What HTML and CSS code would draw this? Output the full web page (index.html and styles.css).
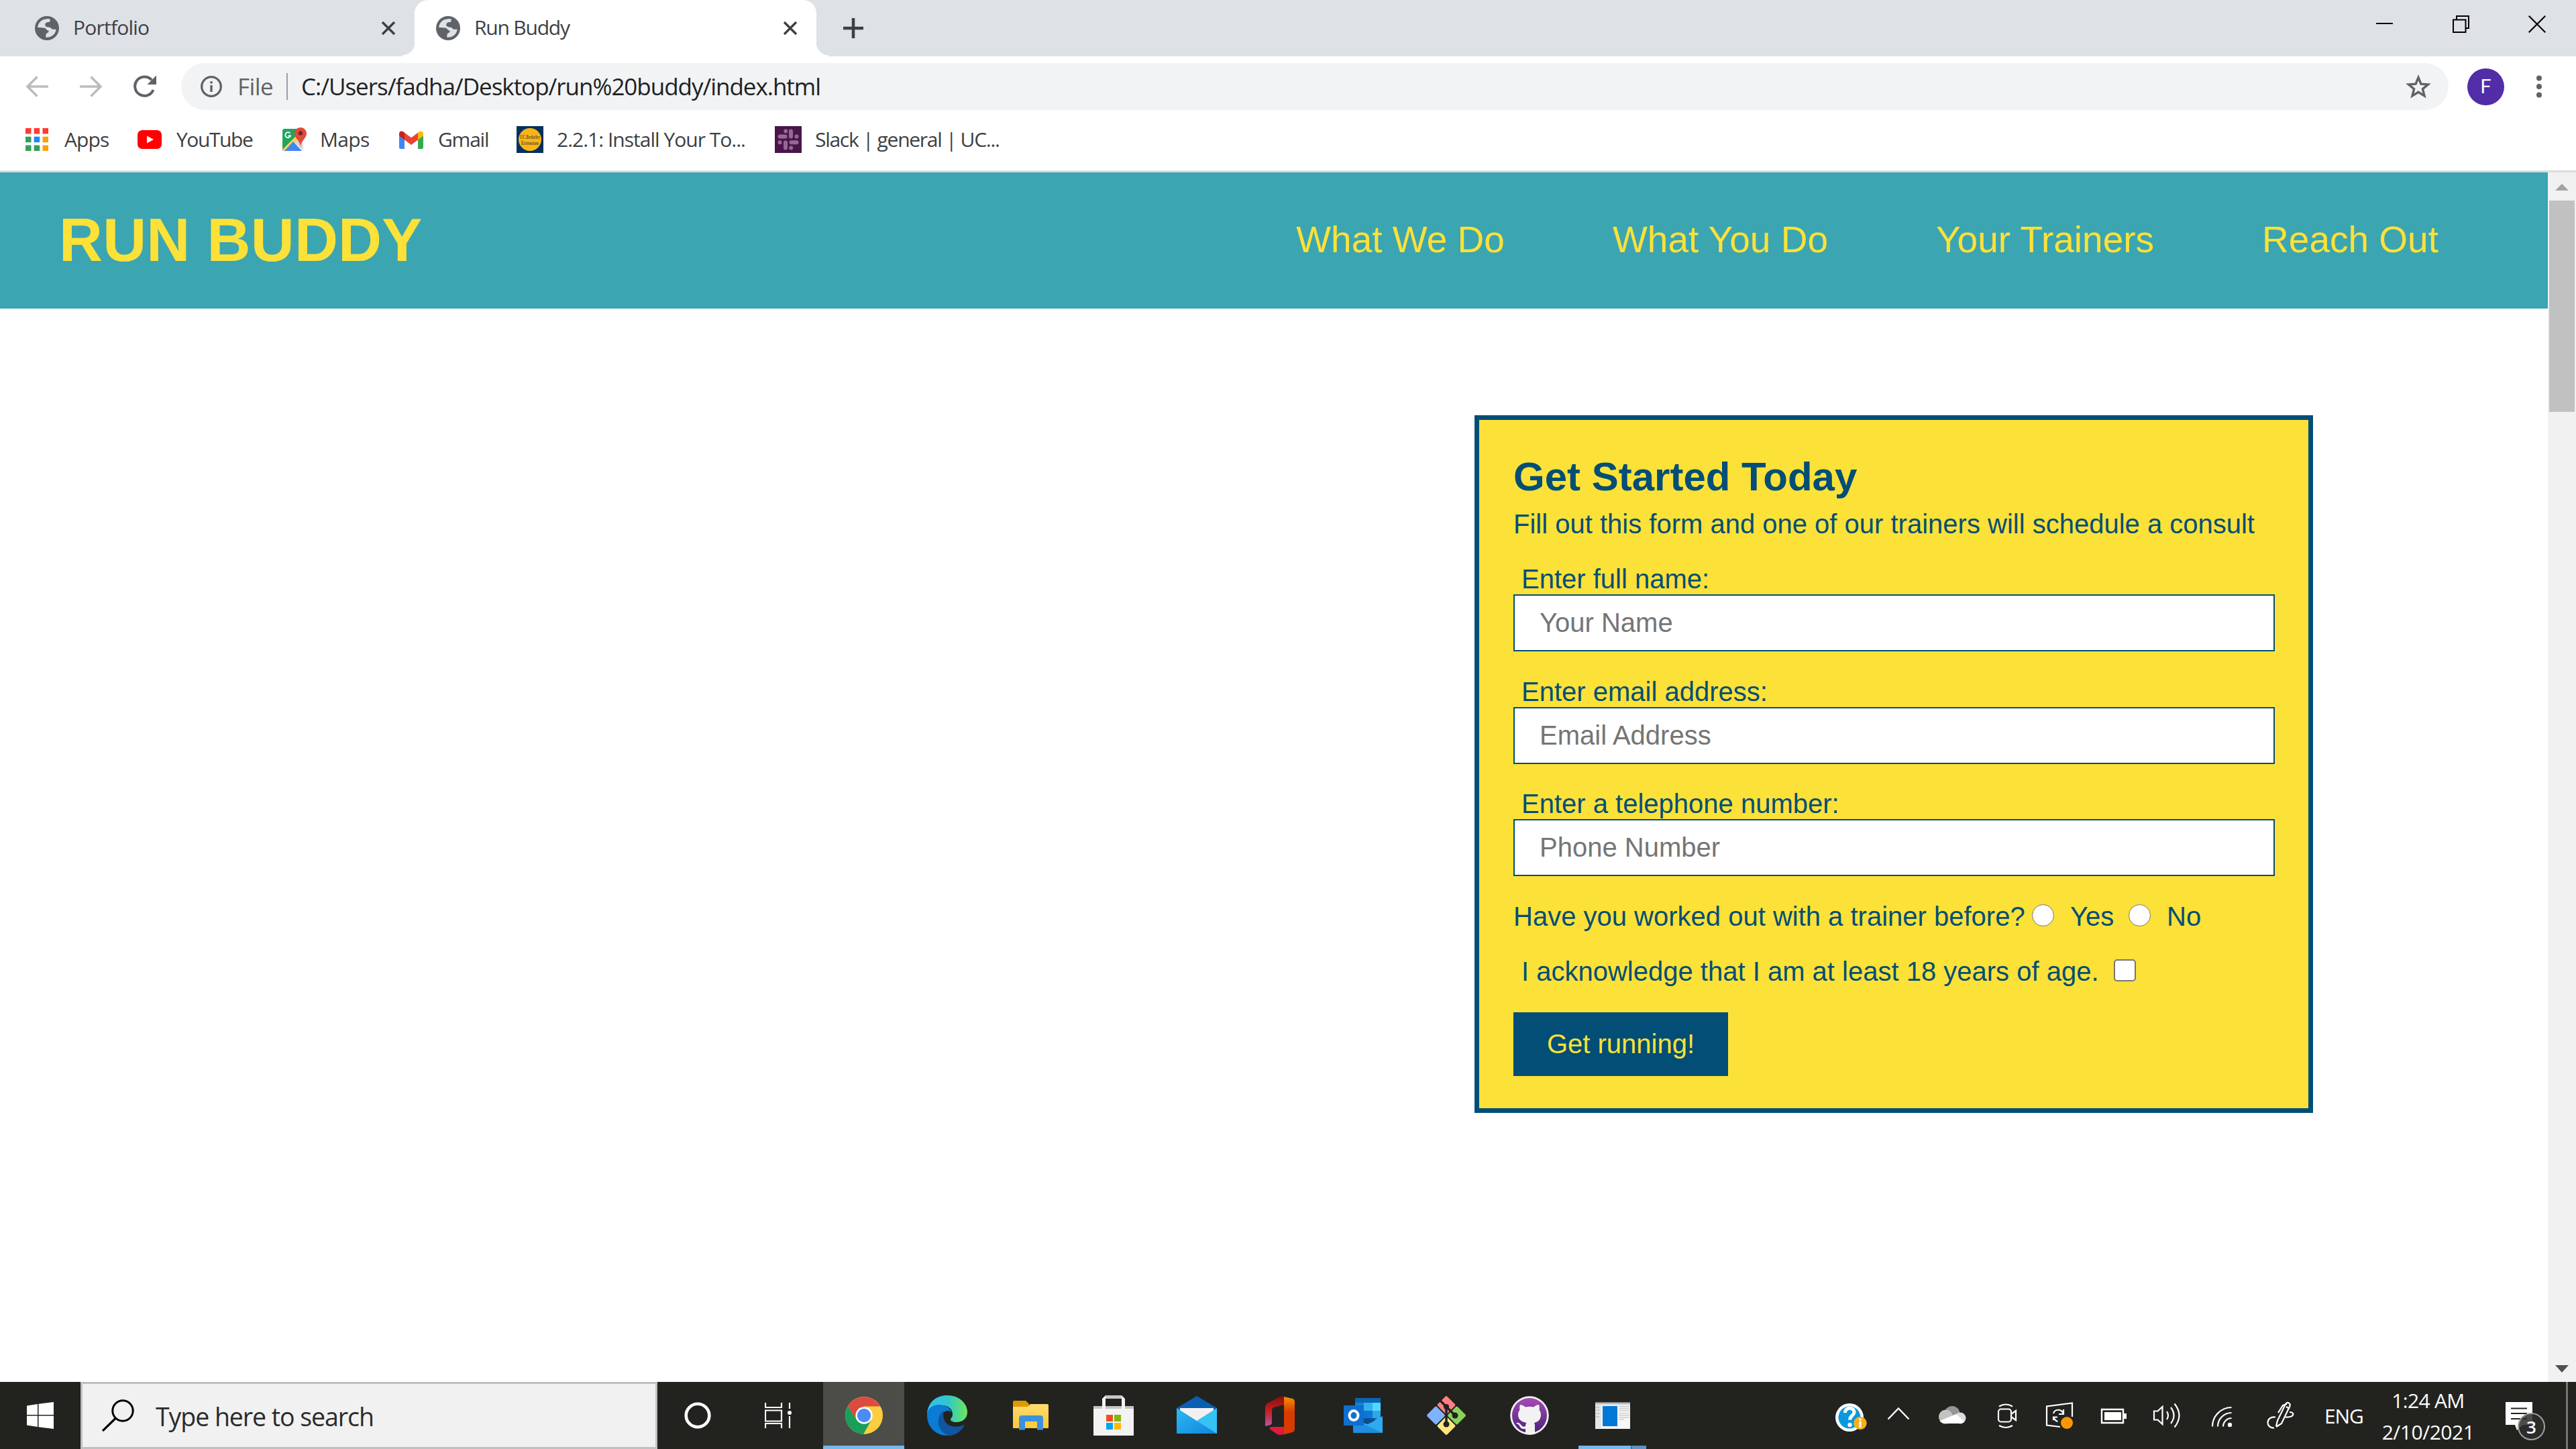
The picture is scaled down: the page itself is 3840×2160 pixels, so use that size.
FILE: index.html
```html
<!DOCTYPE html>
<html lang="en">
<head>
<meta charset="utf-8">
<title>Run Buddy</title>
<link rel="stylesheet" href="styles.css">
</head>
<body>
<svg class="defs" width="0" height="0" aria-hidden="true">
  <defs>
    <symbol id="globe" viewBox="0 0 36 36">
      <circle cx="18" cy="18" r="18" fill="#5f6368"/>
      <path d="M14.500 4.500C9 6 4.500 11 4.200 17c4 .2 8 .2 10.500.8 2.300.6 2.300 3.200 4.800 3.700 1.500.3 1.500 1.500.6 2.500-1 1.300-3.400 1.400-3.600 3.500-.1 1.500-.2 3-.3 4.300 8 .6 14.500-4.500 15.500-12-2.500-.2-4.700.6-6.500-.8-1.500-1.200-2.400-2.500-4.700-2.500-2.700 0-5.500-1.300-5.300-4 .2-2.300 2.500-3.500 4.500-3.500 1.800 0 3.200-.6 3-2.300-.1-1-.3-1.500.2-2.100-3-1-6-.8-8.400.7z" fill="#dee1e6"/>
    </symbol>
    <symbol id="cross" viewBox="0 0 22 22"><path d="M2 2l18 18M20 2L2 20" stroke="#3c4043" stroke-width="3.400" fill="none"/></symbol>
    <linearGradient id="edgeTop" x1="0" x2="1"><stop offset="0" stop-color="#35c1f1"/><stop offset=".5" stop-color="#2fc5cf"/><stop offset="1" stop-color="#6be85a"/></linearGradient>
    <linearGradient id="folderG" x2="0" y2="1"><stop offset="0" stop-color="#ffdb70"/><stop offset="1" stop-color="#fdc83a"/></linearGradient>
    <linearGradient id="officeL" x2="0" y2="1"><stop offset="0" stop-color="#8a0d0a"/><stop offset=".5" stop-color="#c81f25"/><stop offset="1" stop-color="#b955a8"/></linearGradient>
    <linearGradient id="officeR" x2="0" y2="1"><stop offset="0" stop-color="#f39200"/><stop offset=".4" stop-color="#d83b01"/><stop offset="1" stop-color="#d83b01"/></linearGradient>
    <linearGradient id="hubG" x2="0" y2="1"><stop offset="0" stop-color="#a64bb5"/><stop offset="1" stop-color="#4a2178"/></linearGradient>
    <linearGradient id="mailG" x2="1" y2="1"><stop offset="0" stop-color="#2fb8f2"/><stop offset="1" stop-color="#0f86dd"/></linearGradient>
  </defs>
</svg>

<header class="tabs">
  <div class="tab">
    <svg class="favicon" width="36" height="36"><use href="#globe"/></svg>
    <span class="tab-title t1">Portfolio</span>
    <svg class="tab-close" width="22" height="22"><use href="#cross"/></svg>
  </div>
  <div class="tab active">
    <svg class="favicon" width="36" height="36"><use href="#globe"/></svg>
    <span class="tab-title t2">Run Buddy</span>
    <svg class="tab-close" width="22" height="22"><use href="#cross"/></svg>
  </div>
  <svg class="new-tab" width="30" height="30"><path d="M15 0v30M0 15h30" stroke="#3c4043" stroke-width="4.500"/></svg>
  <div class="window-controls">
    <svg width="25" height="25"><path d="M0 12h25" stroke="#000" stroke-width="2"/></svg>
    <svg width="25" height="26"><path d="M1 6.500h18.500v18.500H1zM6 6.500V1h18v18h-4.500" fill="none" stroke="#000" stroke-width="2"/></svg>
    <svg width="26" height="26"><path d="M.7.7l24.600 24.600M25.300.7L.7 25.300" stroke="#000" stroke-width="2.200"/></svg>
  </div>
</header>

<div class="toolbar">
  <svg class="back" width="34" height="32"><path d="M34 16H3M17.500 1.500L3 16l14.500 14.500" fill="none" stroke="#babcbe" stroke-width="3.600"/></svg>
  <svg class="forward" width="34" height="32"><path d="M0 16h31M16.500 1.500L31 16 16.500 30.500" fill="none" stroke="#babcbe" stroke-width="3.600"/></svg>
  <svg class="reload" width="34" height="34"><path d="M29.500 22A14.200 14.200 0 1 1 27 7.200" fill="none" stroke="#5f6368" stroke-width="4"/><path d="M34 .5V14H20.500z" fill="#5f6368"/></svg>
  <div class="omnibox">
    <svg width="32" height="32"><circle cx="16" cy="16" r="14.300" fill="none" stroke="#5f6368" stroke-width="3.300"/><path d="M16 14v10M16 8.200v3.400" stroke="#5f6368" stroke-width="3.400"/></svg>
    <span class="scheme">File</span>
    <span class="divider"></span>
    <span class="url">C:/Users/fadha/Desktop/run%20buddy/index.html</span>
    <svg class="star" width="38" height="36"><path d="M19 4.500l3.900 9.600 10.600.8-8.100 6.700 2.600 10.300L19 26.300l-9 5.600 2.600-10.300-8.100-6.700 10.600-.8z" fill="none" stroke="#5f6368" stroke-width="3.400"/></svg>
  </div>
  <span class="avatar">F</span>
  <svg class="menu" width="10" height="34"><g fill="#5f6368"><circle cx="5" cy="4.500" r="4"/><circle cx="5" cy="17" r="4"/><circle cx="5" cy="29.500" r="4"/></g></svg>
</div>

<nav class="bookmarks">
  <a class="bm"><svg width="34" height="34"><g fill="#ff3b30"><path d="M0 0h8.500v8.500H0z"/><path d="M12.700 0h8.500v8.500h-8.500zM25.500 0H34v8.500h-8.500z"/></g><path d="M0 12.700h8.500v8.500H0zM0 25.500h8.500V34H0zM12.700 25.500h8.500V34h-8.500z" fill="#34a056"/><path d="M12.700 12.700h8.500v8.500h-8.500z" fill="#1e88f5"/><path d="M25.500 12.700H34v8.500h-8.500zM25.500 25.500H34V34h-8.500z" fill="#f7a30a"/></svg><span class="apps">Apps</span></a>
  <a class="bm"><svg width="36" height="28"><rect width="36" height="28" rx="7" fill="#f00"/><path d="M14 8.500l10 5.500-10 5.500z" fill="#fff"/></svg><span class="yt">YouTube</span></a>
  <a class="bm"><svg width="36" height="38" viewBox="0 0 36 38"><rect y="3" width="32" height="33" rx="3" fill="#f1f1f1"/><path d="M3 3h22l3 6L0 36V6a3 3 0 0 1 3-3z" fill="#23a45c"/><path d="M30 16v18L17 23z" fill="#d6d6d6"/><path d="M0 34L24 10l4 4L4 37z" fill="#fbd34c"/><path d="M3 36l13-14 13 14z" fill="#4285f4"/><path d="M27 1c-5 0-9 4-9 9 0 7 7 9 9 19 2-10 9-12 9-19 0-5-4-9-9-9z" fill="#df4b3e"/><circle cx="27" cy="9.500" r="3.200" fill="#7c231c"/><path d="M11.500 9.800a4 4 0 1 0 .6 3.700H8.500" fill="none" stroke="#fff" stroke-width="1.800"/></svg><span class="maps">Maps</span></a>
  <a class="bm"><svg width="36" height="27" viewBox="0 0 36 27"><path d="M0 4l8 6v17H2.500A2.500 2.500 0 0 1 0 24.500z" fill="#4285f4"/><path d="M36 4l-8 6v17h5.500a2.500 2.500 0 0 0 2.500-2.500z" fill="#34a853"/><path d="M28 2.700l2-1.500C32.500-.7 36 1 36 4v3.500l-8 6z" fill="#fbbc04"/><path d="M0 7.500V4c0-3 3.500-4.700 6-2.800L8 2.700v10.800z" fill="#c5221f"/><path d="M8 2.700l10 7.600 10-7.600v10.800L18 21 8 13.500z" fill="#ea4335"/></svg><span class="gmail">Gmail</span></a>
  <a class="bm"><svg class="seal-icon" width="40" height="40"><path fill="#04305f" d="M0 0h40v40H0z"/><circle cx="20" cy="20" r="17" fill="#fdb515"/><text x="20" y="19" class="seal" textLength="30" lengthAdjust="spacingAndGlyphs">UC Berkeley</text><text x="20" y="27.500" class="seal" textLength="26" lengthAdjust="spacingAndGlyphs">Extension</text></svg><span class="ucb">2.2.1: Install Your To...</span></a>
  <a class="bm"><svg width="40" height="40"><path fill="#4a154b" d="M0 0h40v40H0z"/><g stroke="#926a93" stroke-width="6" stroke-linecap="round"><path d="M16.300 7.500v.01M7.500 15.500h8M24 7.500v8M32.500 15.500v.01M24.500 24.200h8M24.200 32.500v.01M16 24.500v8M7.500 24.200v.01"/></g></svg><span class="slack">Slack | general | UC...</span></a>
</nav>

<div class="viewport">
  <main class="page">
    <div class="site-header">
      <h1>RUN BUDDY</h1>
      <nav class="site-nav"><a>What We Do</a><a>What You Do</a><a>Your Trainers</a><a>Reach Out</a></nav>
    </div>
    <section class="hero">
      <form class="signup">
        <h2>Get Started Today</h2>
        <p class="intro">Fill out this form and one of our trainers will schedule a consult</p>
        <div class="field"><label for="name">Enter full name:</label><input id="name" type="text" placeholder="Your Name"></div>
        <div class="field"><label for="email">Enter email address:</label><input id="email" type="email" placeholder="Email Address"></div>
        <div class="field"><label for="phone">Enter a telephone number:</label><input id="phone" type="tel" placeholder="Phone Number"></div>
        <div class="choice">
          <span class="question">Have you worked out with a trainer before?</span>
          <input type="radio" name="trainer" id="yes"><label class="yes" for="yes">Yes</label>
          <input type="radio" name="trainer" id="no"><label class="no" for="no">No</label>
        </div>
        <div class="choice ack"><label for="age">I acknowledge that I am at least 18 years of age.</label><input type="checkbox" id="age"></div>
        <button type="button">Get running!</button>
      </form>
    </section>
  </main>
  <div class="scrollbar">
    <svg width="20" height="10"><path d="M0 10L10 0l10 10z" fill="#a3a3a3"/></svg>
    <span class="thumb"></span>
    <svg class="down" width="20" height="11"><path d="M0 0h20L10 11z" fill="#505050"/></svg>
  </div>
</div>

<footer class="taskbar">
  <svg class="start" width="40" height="40"><path d="M0 5.500L16 3v16H0zM17.500 2.800L40 0v19H17.500zM0 20.500h16V37L0 34.500zM17.500 20.500H40V40l-22.500-2.800z" fill="#fff"/></svg>
  <div class="search">
    <svg width="48" height="48"><circle cx="31" cy="17" r="15.200" fill="none" stroke="#000" stroke-width="3"/><path d="M20.500 28L1 47" stroke="#000" stroke-width="3.200"/></svg>
    <span>Type here to search</span>
  </div>
  <svg class="cortana" width="40" height="40"><circle cx="20" cy="20" r="17.300" fill="none" stroke="#fff" stroke-width="4.600"/></svg>
  <svg class="taskview" width="40" height="38"><g fill="none" stroke="#fff" stroke-width="2.200"><path d="M1 0v7h24V0M1 11.500h24v16H1zM1 38v-7h24v7M37 0v9M37 20v18"/></g><circle cx="37" cy="15" r="3" fill="#fff"/></svg>
  <div class="apps-row">
    <span class="app current"><svg width="60" height="60"><circle cx="30" cy="30" r="28" fill="#fdcd40"/><path d="M5.800 16A28 28 0 0 1 54.200 16.500H30L18 36z" fill="#dd4b3f"/><path d="M5.800 16A28 28 0 0 0 29 58L41 36.500 18.500 36z" fill="#1b9e5a"/><circle cx="30" cy="30" r="12.700" fill="#fff"/><circle cx="30" cy="30" r="10.200" fill="#4c8bf5"/></svg></span>
    <span class="app"><svg width="60" height="60"><path d="M0 30C0 10 14 0 30 0c18 0 30 12 30 25 0 10-8 15-16 15-6 0-9-2-9-4 0-2 3-3 3-8 0-7-6-13-16-13C10 15 0 22 0 30z" fill="url(#edgeTop)"/><path d="M0 30C0 19 9 14 18 14c9 0 17 5 18 11-9-6-15 3-15 11 0 12 9 20 18 22-3 1.500-6 2-9 2C13 60 0 47 0 30z" fill="#0b7bd4"/><path d="M25 23c-12 7-12 30 7 37 10 0 18-6 23-14 1-2 0-2-1.500-1.500C38 51 20 43 25 23z" fill="#10559f"/></svg></span>
    <span class="app"><svg width="60" height="60"><path d="M4 10q0-2 2-2h17l5 5v6H4z" fill="#dd9a00"/><path d="M4 17h22l4-4h25q2 0 2 2v34H4z" fill="url(#folderG)"/><path d="M13 51.500V34q0-4 4-4h28q4 0 4 4v17.500h-9V39H22v12.500z" fill="#3c92da"/></svg></span>
    <span class="app"><svg width="60" height="60"><path d="M0 16h60v5H0z" fill="#c4c4c4"/><path d="M13 20V5l5-5h24l5 5v15h-5V5H18v15z" fill="#f4f4f4"/><path d="M18 0h24v5H18z" fill="#c8c8c8"/><path d="M0 20h60v40H0z" fill="#f3f3f3"/><path d="M19 29h10v10H19z" fill="#f25022"/><path d="M31 29h10v10H31z" fill="#7fba00"/><path d="M19 41h10v10H19z" fill="#00a4ef"/><path d="M31 41h10v10H31z" fill="#ffb900"/></svg></span>
    <span class="app"><svg width="60" height="60"><path d="M0 19L30 1l30 18v9H0z" fill="#0a5fb4"/><path d="M5 19h50v10L30 42 5 29z" fill="#f3f1f0"/><path d="M60 19v38H0z" fill="#35c3f3"/><path d="M0 19l60 38H0z" fill="url(#mailG)"/><path d="M5 19h50L30 37.500z" fill="#f3f1f0"/></svg></span>
    <span class="app"><svg width="60" height="60"><path d="M8 46V17q0-3 3-5L30 2q4-1 6 0v12l-12 3q-6 1-6 5v19q0 2-2 3z" fill="url(#officeL)"/><path d="M36 2l13 3q3 1 3 5v40q0 4-3 5l-16 4q3-2 3-8z" fill="url(#officeR)"/><path d="M16 47h20v5q0 6-5 7-3 0-5-1L17 52q-4-3-1-5z" fill="#dc1d3c"/></svg></span>
    <span class="app"><svg width="60" height="60"><path d="M18 4h38v7H18z" fill="#0b64b4"/><path d="M18 11h13v12H18z" fill="#0a84dc"/><path d="M31 11h13v12H31z" fill="#35b0ef"/><path d="M44 11h12v12H44z" fill="#50d9ff"/><path d="M18 23h13v14H18z" fill="#0868c0"/><path d="M31 23h13v14H31z" fill="#0a78d4"/><path d="M44 23h12v14H44z" fill="#2ca8ea"/><path d="M20 34h31l-14 9z" fill="#0a4f95"/><path d="M15 36l22 7 22-12v25H15z" fill="#2faaf0"/><path d="M15 36l44 20H15z" fill="#1d8ee0"/><path d="M1 15h30v30H1z" fill="#0f6fd0"/><ellipse cx="16" cy="30" rx="6.500" ry="7" fill="none" stroke="#fff" stroke-width="4"/></svg></span>
    <span class="app"><svg width="60" height="60"><g transform="rotate(45 30 30)"><rect x="9" y="9" width="20" height="20" rx="2" fill="#ff8080"/><rect x="31" y="9" width="20" height="20" rx="2" fill="#8ad25c"/><rect x="9" y="31" width="20" height="20" rx="2" fill="#80b3ff"/><rect x="31" y="31" width="20" height="20" rx="2" fill="#ffe680"/></g><g stroke="#22231f" stroke-width="3.500" fill="none"><path d="M20 7l10 10v24M30 17l13 13"/></g><g fill="#22231f"><circle cx="30" cy="17" r="4"/><circle cx="43" cy="30" r="4.500"/><circle cx="30" cy="43" r="4.500"/></g></svg></span>
    <span class="app"><svg width="60" height="60"><circle cx="30" cy="30" r="28.800" fill="#f2f2f2"/><circle cx="30" cy="30" r="26" fill="url(#hubG)"/><path d="M16 14c3 0 6 2 8 3.500a28 28 0 0 1 12 0c2-1.500 5-3.500 8-3.500 1 3 1 5 .5 7.500C46 24 47 26 47 29c0 7-4 10.500-10 12 1 2 1 4 1 6v10.500a28 28 0 0 1-14 .3V50c-8 1-8-4-10-6-1-1-3-2-4-2 2-3 6 0 7.500 2 2 3 4 3 6.500 2 0-2 .5-4 1.500-5C18 39.500 13 36 13 29c0-3 1-5 2.500-7.500C15 19 15 17 16 14z" fill="#f2f2f2"/></svg></span>
    <span class="app open"><svg width="60" height="60"><path d="M4 10h52v40H4z" fill="#f6f6f6"/><path d="M4 10h52v2H4z" fill="#8f8f8f"/><path d="M4 12h52v3H4z" fill="#dcdcdc"/><path d="M4 15h9v34H4z" fill="#e6e6e6"/><path d="M15 16h22v30H15z" fill="#0078d7"/><path d="M39 17h16M39 20h16M39 23h16M39 27h16M39 30h16M39 33h16M39 36h8" stroke="#bcbcbc"/><path d="M5 18h6M5 22h6M5 27h6M5 32h6" stroke="#999" stroke-dasharray="2 1"/></svg></span>
  </div>
  <div class="tray">
    <svg width="80" height="100"><circle cx="47" cy="53" r="21" fill="#fff"/><circle cx="47" cy="53" r="16.500" fill="#0a99dc"/><path d="M40.500 46c0-9 13.500-8.500 13.500-1 0 5-6.500 5.500-6.500 11.500" fill="none" stroke="#fff" stroke-width="5"/><circle cx="47.500" cy="64" r="3.200" fill="#fff"/><circle cx="63" cy="61.500" r="9.700" fill="#f9b016"/><path d="M63 59v9M63 54.500v3" stroke="#fff" stroke-width="3.400"/></svg>
    <svg width="80" height="100"><path d="M24.500 55.500L40 39.500l15.500 16" fill="none" stroke="#fff" stroke-width="2.400"/></svg>
    <svg width="80" height="100"><circle cx="40" cy="47.500" r="11.500" fill="#959595"/><circle cx="30.500" cy="52" r="10.500" fill="#c3c3c3"/><circle cx="52" cy="54" r="8.500" fill="#dcdcdc"/><path d="M21.500 58L46 48l12 11a7 7 0 0 1-6 3H29a9 9 0 0 1-7.500-4z" fill="#fff"/></svg>
    <svg width="80" height="100"><g fill="none" stroke="#fff" stroke-width="2.200"><rect x="29" y="40.500" width="19" height="19" rx="4"/><path d="M48 48l7-5v14l-7-5M30 36.500q10-6 20 0M30 65q10 6 20 0"/></g></svg>
    <svg width="80" height="100"><g fill="none" stroke="#fff" stroke-width="2.200"><path d="M59 52V31.500l-38 5v28l20 2.500"/><path d="M31 47c2-7 12-7 14.500 0M46 41v7h-7M31 57v-4.500h6M31.500 53q2 5 6 6"/></g><circle cx="51" cy="61" r="9" fill="#ff9800"/></svg>
    <svg width="80" height="100"><path d="M23 41h32v20H23z" fill="none" stroke="#fff" stroke-width="2.400"/><path d="M27 45h25v12H27zM56 47h4v8h-4z" fill="#fff"/></svg>
    <svg width="80" height="100"><g fill="none" stroke="#fff" stroke-width="2.200"><path d="M21 43.500h5.500l7-6.500v26l-7-6.500H21zM40 44q4 6 0 12M46 38q9 12 0 24M51.500 32.500q14 17.500 0 35"/></g></svg>
    <svg width="80" height="100"><g fill="none" stroke="#fff" stroke-width="2.200"><path d="M28 66.500A28.500 28.500 0 0 1 56.500 38M36 66.500A20.500 20.500 0 0 1 56.500 46M44 66.500A12.500 12.500 0 0 1 56.500 54"/></g><circle cx="54" cy="64" r="3.200" fill="#fff"/></svg>
    <svg width="100" height="100"><g fill="none" stroke="#fff" stroke-width="2.200"><path d="M43 66l2-8.500L57 33q3-4 6-.5 1.500 1.500 0 4.500L51 62l-8 5M46 46l7-11 6-2M58 37l5 3M42 52.500c-15-2-15 17-2 16M63 45c8 0 8 8-6 7.500"/></g></svg>
  </div>
  <span class="lang">ENG</span>
  <div class="clock"><span class="time">1:24 AM</span><span class="date">2/10/2021</span></div>
  <div class="notify">
    <svg width="40" height="46"><path d="M0 0h40v34H26l-9 8-3-8H0z" fill="#fff"/><path d="M8 9.500h24M8 17h24M8 25h24" stroke="#22231f" stroke-width="2"/></svg>
    <span class="badge">3</span>
  </div>
  <span class="show-desktop"></span>
</footer>
</body>
</html>
```
FILE: styles.css
```css
* { box-sizing: border-box; }
body {
  margin: 0;
  width: 3840px;
  height: 2160px;
  overflow: hidden;
  display: flex;
  flex-direction: column;
  background: #fff;
  color: #3c4043;
  font-family: "Open Sans", "Noto Sans", sans-serif;
  font-size: 30px;
}
svg { display: block; flex: none; }
span { white-space: nowrap; }
.defs { position: absolute; }

/* Browser tab strip */
.tabs { height: 84px; flex: none; display: flex; align-items: center; background: #dee1e6; }
.tab { width: 618px; height: 84px; display: flex; align-items: center; padding-left: 52px; }
.tab.active { width: 599px; padding-left: 32px; background: #fff; border-radius: 20px 20px 0 0; position: relative; }
.tab.active::before, .tab.active::after {
  content: ""; position: absolute; bottom: 0; width: 18px; height: 20px;
}
.tab.active::before { left: -18px; background: radial-gradient(circle at 0 0, transparent 18px, #fff 18.500px); }
.tab.active::after { right: -18px; background: radial-gradient(circle at 100% 0, transparent 18px, #fff 18.500px); }
.tab-title { margin-left: 21px; padding-bottom: 3px; }
.t1 { letter-spacing: -0.79px; }
.t2 { letter-spacing: -1.2px; }
.tab-close { margin-left: auto; margin-right: 28px; }
.new-tab { margin-left: 40px; }
.window-controls { margin-left: auto; margin-right: 45px; display: flex; gap: 88.500px; align-items: center; padding-bottom: 13px; }

/* Address bar */
.toolbar { height: 90px; flex: none; display: flex; align-items: center; padding-left: 38px; }
.forward { margin-left: 47px; }
.reload { margin-left: 46px; }
.omnibox {
  width: 3380px; height: 70px; margin-left: 37px; padding: 0 26px 0 29px;
  display: flex; align-items: center;
  border-radius: 35px; background: #f1f3f4; font-size: 35px;
}
.scheme { margin-left: 23px; padding-bottom: 1px; width: 73px; color: #5f6368; letter-spacing: -0.58px; }
.divider { width: 2px; height: 40px; background: #9aa0a6; }
.url { margin-left: 20px; padding-bottom: 1px; color: #202124; letter-spacing: -1.03px; }
.star { margin-left: auto; }
.avatar {
  width: 55px; height: 55px; margin-left: 28px; border-radius: 50%;
  display: flex; align-items: center; justify-content: center;
  background: #512da8; color: #fff; font: 29px Roboto, sans-serif;
}
.menu { margin-left: 47px; }

/* Bookmarks bar */
.bookmarks {
  height: 83px; flex: none; padding: 0 0 12px 38px;
  display: grid; grid-template-columns: 167px 216px 174px 175px 385px 400px; align-items: center;
  border-bottom: 3px solid #dadce0;
}
.bm { display: flex; align-items: center; gap: 20px; }
.bm span { padding-bottom: 1px; }
.bm:first-child { gap: 24px; }
.bm:nth-child(2), .bm:nth-child(4) { gap: 22px; }
.apps { letter-spacing: -0.89px; }
.yt { letter-spacing: -1.42px; }
.maps { letter-spacing: -0.67px; }
.gmail { letter-spacing: -1.21px; }
.ucb { letter-spacing: -0.99px; }
.slack { letter-spacing: -1.29px; }
.seal-icon { overflow: visible; }
.seal { font: bold 8px "Liberation Serif", serif; fill: #6b5428; text-anchor: middle; }

/* Page content */
.viewport { height: 1803px; flex: none; display: flex; }
.page { width: 3798px; font-family: "Liberation Sans", Arial, sans-serif; }
.site-header {
  height: 203px; padding: 0 163px 0 88px;
  display: flex; align-items: center; justify-content: space-between;
  background: #3ba5b2; color: #fce138;
}
.site-header h1 { margin: 0; font-size: 90px; letter-spacing: 0.15px; }
.site-nav { display: flex; gap: 161px; font-size: 55px; padding-bottom: 3px; }
.hero { display: flex; justify-content: flex-end; padding: 159px 350px 0 0; }
.signup {
  width: 1250px; height: 1040px; padding: 51px 50px 50px 51px;
  border: 7px solid #024e76; background: #fce138; color: #024e76;
  font-size: 40px; line-height: 46px;
}
.signup h2 { margin: 0; font-size: 60px; line-height: 68px; }
.intro { margin: 13px 0 36px; white-space: nowrap; }
.field { margin-bottom: 36.500px; }
.field label { display: block; padding-left: 12px; }
.field input {
  display: block; width: 100%; height: 85px; margin: 0; padding: 0 37px;
  border: 2px solid #024e76; border-radius: 0; background: #fff;
  font: 40px "Liberation Sans", Arial, sans-serif;
}
.field input::placeholder { color: #757575; opacity: 1; }
.choice { height: 46px; display: flex; align-items: center; }
.choice input {
  appearance: none; flex: none; width: 33px; height: 33px; margin: 0 0 2px;
  border: 1.500px solid #767676; border-radius: 50%; background: #fff;
}
.choice input[type="checkbox"] { border-radius: 5px; border-width: 2px; }
.question { width: 773px; }
.choice label { white-space: nowrap; }
.yes { width: 111px; padding-left: 24px; }
.no { padding-left: 24px; }
.ack { margin-top: 36px; }
.ack label { width: 895px; padding-left: 12px; }
.signup button {
  display: block; width: 320px; height: 95px; margin: 38px 0 0; padding: 0;
  border: 0; background: #024e76; color: #fce138;
  font: 40px "Liberation Sans", Arial, sans-serif;
}

/* Scrollbar */
.scrollbar { width: 42px; padding: 17px 0 14px; display: flex; flex-direction: column; align-items: center; background: #f1f1f1; }
.thumb { width: 38px; height: 315px; margin-top: 15px; background: #c1c1c1; }
.down { margin-top: auto; }

/* Taskbar */
.taskbar { height: 100px; flex: none; display: flex; align-items: center; background: #22231f; color: #fff; }
.start { margin: 0 40px; }
.search {
  width: 860px; height: 100px; padding-left: 29px;
  display: flex; align-items: center;
  border: 3px solid #c0c0c0; background: #f1f1f1; color: #2b2b2b; font-size: 37.500px;
}
.search span { margin-left: 32px; padding-top: 3px; letter-spacing: -1.06px; }
.cortana { margin-left: 40px; }
.taskview { margin-left: 80px; }
.apps-row { display: flex; gap: 3px; margin-left: 47px; }
.app { width: 121px; height: 100px; display: flex; align-items: center; justify-content: center; }
.current { background: #4c4d49; box-shadow: inset 0 -5px #76b9ed; }
.open { background: linear-gradient(90deg, #76b9ed 78px, #4b6f8c 78px 80px, #5e94be 80px 101px, transparent 101px) 10px 95px / 121px 5px no-repeat; }
.tray { display: flex; margin-left: 246px; }
.lang { width: 89px; margin-left: 15px; letter-spacing: -1.13px; }
.clock { width: 131px; display: flex; flex-direction: column; align-items: center; line-height: 47px; padding-top: 2px; }
.time { letter-spacing: -0.68px; }
.date { letter-spacing: -0.49px; }
.notify { position: relative; width: 90px; margin-left: 50px; padding-top: 6px; }
.badge {
  position: absolute; left: 18px; top: 22px; width: 41px; height: 41px;
  display: flex; align-items: center; justify-content: center;
  border: 2px solid #a0a0a0; border-radius: 50%; background: rgba(45, 45, 44, 0.85);
  font-size: 26px; font-weight: 600;
}
.show-desktop { width: 3px; height: 100px; background: #757575; }
```
